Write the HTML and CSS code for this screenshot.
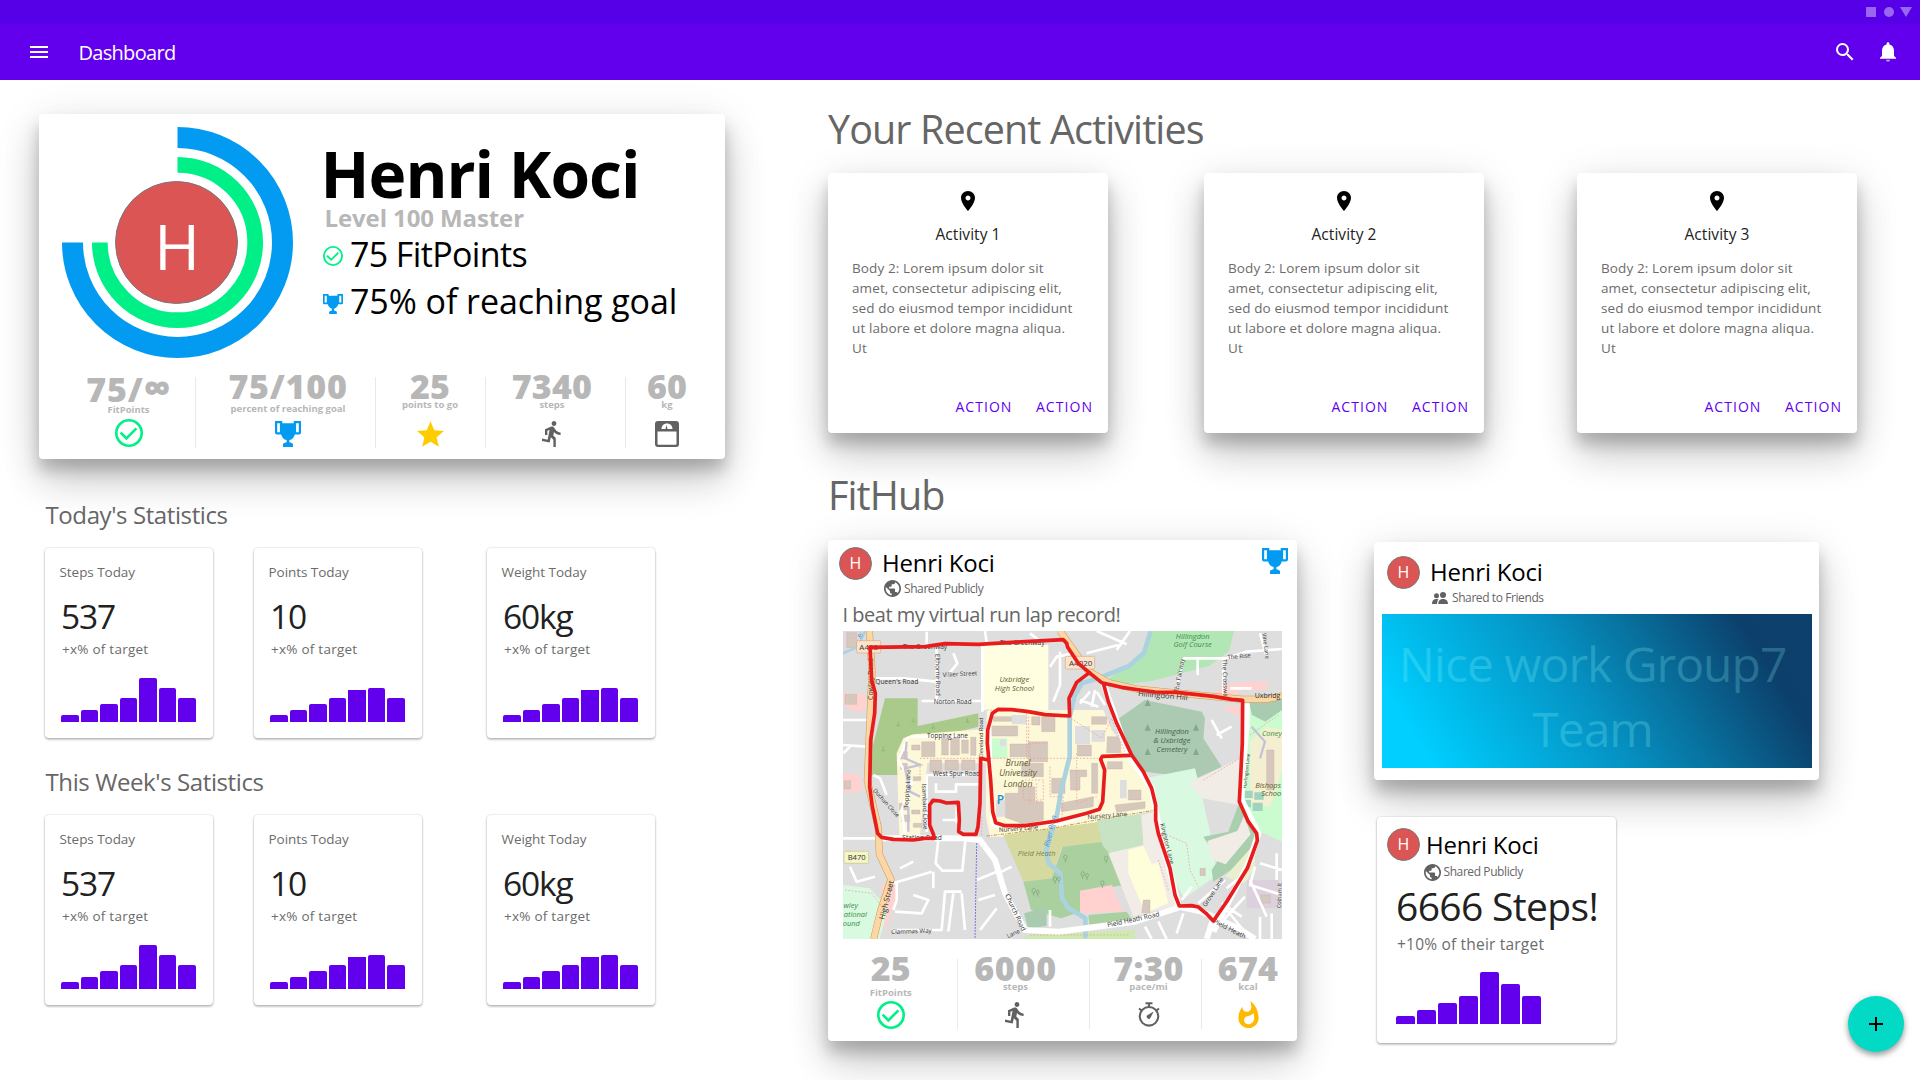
FILE: index.html
```html
<!DOCTYPE html>
<html lang="en">
<head>
<meta charset="utf-8">
<title>Dashboard</title>
<link rel="stylesheet" href="styles.css">
</head>
<body>
<svg class="defs" aria-hidden="true">
  <symbol id="check" viewBox="0 0 28 28"><circle cx="14" cy="14" r="12.7" fill="none" stroke="#00f087" stroke-width="2.6"/><path d="M5.6 13.6l5.8 5.7L21.4 9.4" fill="none" stroke="#00f087" stroke-width="2.6"/></symbol>
  <symbol id="trophy" viewBox="0 0 26 26"><path fill="#039bf2" fill-rule="evenodd" d="M0 0h7.3v2.2h11.4V0H26v11.6c0 1-.8 1.8-1.8 1.8h-4.4c-.7 3-2.6 5-5.4 5.7v2.2c1.500.2 3 .9 3.600 1.800V26H8v-2.900c.6-.9 2.100-1.600 3.600-1.800v-2.200c-2.800-.7-4.700-2.700-5.400-5.700H1.800C.8 13.400 0 12.600 0 11.600zM2.200 2.300v8.900h2.700V2.300zM21.100 2.300v8.900h2.700V2.300z"/></symbol>
  <symbol id="star" viewBox="2 2 20 19"><path fill="#fc0" d="M12 17.270 18.180 21l-1.640-7.030L22 9.240l-7.190-.61L12 2 9.190 8.630 2 9.240l5.460 4.730L5.820 21z"/></symbol>
  <symbol id="run" viewBox="3.500 1.500 17.500 21.500"><path fill="#616161" d="M13.490 5.480c1.100 0 2-.9 2-2s-.9-2-2-2-2 .9-2 2 .9 2 2 2zm-3.600 13.900 1-4.400 2.100 2v6h2v-7.500l-2.100-2 .6-3c1.300 1.500 3.300 2.500 5.500 2.500v-2c-1.900 0-3.500-1-4.300-2.400l-1-1.600c-.4-.6-1-1-1.700-1-.3 0-.5.1-.8.1l-5.200 2.200v4.700h2v-3.400l1.800-.7-1.600 8.100-4.900-1-.4 2 7 1.400z"/></symbol>
  <symbol id="scale" viewBox="0 0 24 26"><path fill="#616161" fill-rule="evenodd" d="M3 0h18a3 3 0 0 1 3 3v20a3 3 0 0 1-3 3H3a3 3 0 0 1-3-3V3a3 3 0 0 1 3-3zM2.500 10.500V23c0 .6.3.8.8.8h17.400c.5 0 .8-.2.800-.8V10.500zM6.500 8h4l1-4 1 4h5c0-3.300-2.400-5.400-5.500-5.400S6.500 4.700 6.500 8z"/></symbol>
  <symbol id="watch" viewBox="0 0 22 25"><g fill="none" stroke="#616161" stroke-width="2.100"><circle cx="11" cy="14.300" r="9.300"/><path d="M7.500 1.200h7M11 1v4M1 6.500l2.600 2M21 6.500l-2.600 2"/></g><path fill="#616161" d="M15.700 9.600 9.700 13a2 2 0 1 0 2.800 2.700z"/></symbol>
  <symbol id="flame" viewBox="4 .6 16 21.400"><path fill="#ffb900" d="M13.500.67s.74 2.650.74 4.800c0 2.060-1.350 3.730-3.410 3.730-2.070 0-3.630-1.670-3.630-3.730l.03-.36C5.210 7.510 4 10.620 4 14c0 4.420 3.580 8 8 8s8-3.580 8-8C20 8.610 17.410 3.800 13.500.67zM11.710 19c-1.780 0-3.220-1.400-3.220-3.140 0-1.620 1.050-2.760 2.810-3.120 1.770-.36 3.600-1.210 4.620-2.580.39 1.290.59 2.650.59 4.040 0 2.650-2.150 4.800-4.800 4.800z"/></symbol>
  <symbol id="globe" viewBox="2 2 20 20"><path fill="#616161" d="M12 2C6.480 2 2 6.480 2 12s4.480 10 10 10 10-4.480 10-10S17.520 2 12 2zm-1 17.930c-3.950-.49-7-3.850-7-7.930 0-.62.08-1.210.21-1.790L9 15v1c0 1.100.9 2 2 2v1.930zm6.900-2.540c-.26-.81-1-1.390-1.900-1.390h-1v-3c0-.55-.45-1-1-1H8v-2h2c.55 0 1-.45 1-1V7h2c1.100 0 2-.9 2-2v-.41c2.930 1.190 5 4.060 5 7.410 0 2.080-.8 3.970-2.100 5.390z"/></symbol>
  <symbol id="people" viewBox="0 0 16 12"><g fill="#616161"><circle cx="11" cy="3" r="3"/><path d="M6.300 12c0-3.600 1.900-5 4.700-5s5 1.400 5 5zM0 12c0-3.500 1.500-4.900 4.300-4.900 1 0 1.600.1 2.200.4C5.500 8.500 5 10 5 12z"/><circle cx="4.500" cy="3.700" r="2.500"/></g></symbol>
  <symbol id="pin" viewBox="0 0 24 24"><path d="M12 2C8.130 2 5 5.130 5 9c0 5.250 7 13 7 13s7-7.750 7-13c0-3.870-3.130-7-7-7zm0 9.500c-1.380 0-2.500-1.120-2.500-2.500s1.120-2.500 2.500-2.500 2.500 1.120 2.500 2.500-1.120 2.500-2.500 2.500z"/></symbol>
</svg>

<header class="header">
  <div class="system">
    <svg width="46" height="10" viewBox="0 0 46 10"><path d="M0 0h10v10H0zM34 0h12l-6 10z"/><circle cx="23" cy="5" r="5"/></svg>
  </div>
  <div class="appbar">
    <svg class="menu" width="18" height="12" viewBox="0 0 18 12"><path d="M0 0h18v2H0zM0 5h18v2H0zM0 10h18v2H0z"/></svg>
    <h1>Dashboard</h1>
    <svg width="24" height="24" viewBox="0 0 24 24"><path d="M15.500 14h-.79l-.28-.27A6.471 6.471 0 0 0 16 9.500 6.500 6.500 0 1 0 9.500 16c1.610 0 3.090-.59 4.230-1.570l.27.28v.79l5 4.990L20.490 19l-4.990-5zm-6 0C7.010 14 5 11.990 5 9.500S7.010 5 9.500 5 14 7.010 14 9.500 11.990 14 9.500 14z"/></svg>
    <svg class="bell" width="24" height="24" viewBox="0 0 24 24"><path d="M12 2.300c-.8 0-1.400.6-1.400 1.400v.7C7.800 5 6 7.400 6 10.500v5.600l-2 1.600v1h16v-1l-2-1.600v-5.600c0-3.100-1.800-5.500-4.600-6.100v-.7c0-.8-.6-1.400-1.400-1.400z"/><path opacity=".6" d="M10 19.700h4a2 2 0 0 1-4 0z"/></svg>
  </div>
</header>

<main class="main">
  <div class="left">
    <section class="card profile">
      <div class="profile-top">
        <svg class="rings" width="232" height="232" viewBox="0 0 232 232">
          <g fill="none"><path d="M115.500 10.500A105 105 0 1 1 10.500 115.500" stroke="#039bf2" stroke-width="21"/><path d="M115.500 37.800A77.700 77.700 0 1 1 37.800 115.500" stroke="#00f087" stroke-width="15.700"/></g>
          <circle cx="114.500" cy="115.500" r="61" fill="#db5555" stroke="#777" stroke-width="1"/>
          <text x="115" y="143" text-anchor="middle">H</text>
        </svg>
        <div class="profile-info">
          <h2>Henri Koci</h2>
          <p class="level">Level 100 Master</p>
          <p class="line"><svg width="20" height="20"><use href="#check"/></svg><span class="fp">75 FitPoints</span></p>
          <p class="line goal"><svg width="20" height="20"><use href="#trophy"/></svg><span>75% of reaching goal</span></p>
        </div>
      </div>
      <div class="metrics metrics-profile">
        <div class="m low"><b class="inf">75/<span>∞</span></b><small>FitPoints</small><svg width="28" height="28"><use href="#check"/></svg></div>
        <div class="m mid"><b class="wide">75/100</b><small>percent of reaching goal</small><svg width="26" height="26"><use href="#trophy"/></svg></div>
        <div class="m"><b>25</b><small>points to go</small><svg width="27" height="26"><use href="#star"/></svg></div>
        <div class="m"><b>7340</b><small>steps</small><svg width="21" height="26"><use href="#run"/></svg></div>
        <div class="m"><b>60</b><small>kg</small><svg width="24" height="26"><use href="#scale"/></svg></div>
      </div>
    </section>

    <h3 class="sub">Today's Statistics</h3>
    <div class="stats">
      <article class="stat"><p class="label">Steps Today</p><p class="value">537</p><p class="delta">+x% of target</p><div class="bars"><i style="height:7px"></i><i style="height:12px"></i><i style="height:18px"></i><i style="height:24px"></i><i style="height:44px"></i><i style="height:34px"></i><i style="height:24px"></i></div></article>
      <article class="stat"><p class="label">Points Today</p><p class="value">10</p><p class="delta">+x% of target</p><div class="bars"><i style="height:7px"></i><i style="height:12px"></i><i style="height:18px"></i><i style="height:24px"></i><i class="cut" style="height:32.500px"></i><i style="height:34px"></i><i style="height:24px"></i></div></article>
      <article class="stat"><p class="label">Weight Today</p><p class="value">60kg</p><p class="delta">+x% of target</p><div class="bars"><i style="height:7px"></i><i style="height:12px"></i><i style="height:18px"></i><i style="height:24px"></i><i class="cut" style="height:32.500px"></i><i style="height:34px"></i><i style="height:24px"></i></div></article>
    </div>
    <h3 class="sub week">This Week's Satistics</h3>
    <div class="stats">
      <article class="stat"><p class="label">Steps Today</p><p class="value">537</p><p class="delta">+x% of target</p><div class="bars"><i style="height:7px"></i><i style="height:12px"></i><i style="height:18px"></i><i style="height:24px"></i><i style="height:44px"></i><i style="height:34px"></i><i style="height:24px"></i></div></article>
      <article class="stat"><p class="label">Points Today</p><p class="value">10</p><p class="delta">+x% of target</p><div class="bars"><i style="height:7px"></i><i style="height:12px"></i><i style="height:18px"></i><i style="height:24px"></i><i class="cut" style="height:32.500px"></i><i style="height:34px"></i><i style="height:24px"></i></div></article>
      <article class="stat"><p class="label">Weight Today</p><p class="value">60kg</p><p class="delta">+x% of target</p><div class="bars"><i style="height:7px"></i><i style="height:12px"></i><i style="height:18px"></i><i style="height:24px"></i><i class="cut" style="height:32.500px"></i><i style="height:34px"></i><i style="height:24px"></i></div></article>
    </div>
  </div>

  <div class="right">
    <h2 class="title">Your Recent Activities</h2>
    <div class="activities">
      <article class="card activity"><svg width="24" height="24"><use href="#pin"/></svg><h4>Activity 1</h4><p>Body 2: Lorem ipsum dolor sit<br>amet, consectetur adipiscing elit,<br>sed do eiusmod tempor incididunt<br>ut labore et dolore magna aliqua.<br>Ut</p><div class="actions"><a>ACTION</a><a>ACTION</a></div></article>
      <article class="card activity"><svg width="24" height="24"><use href="#pin"/></svg><h4>Activity 2</h4><p>Body 2: Lorem ipsum dolor sit<br>amet, consectetur adipiscing elit,<br>sed do eiusmod tempor incididunt<br>ut labore et dolore magna aliqua.<br>Ut</p><div class="actions"><a>ACTION</a><a>ACTION</a></div></article>
      <article class="card activity"><svg width="24" height="24"><use href="#pin"/></svg><h4>Activity 3</h4><p>Body 2: Lorem ipsum dolor sit<br>amet, consectetur adipiscing elit,<br>sed do eiusmod tempor incididunt<br>ut labore et dolore magna aliqua.<br>Ut</p><div class="actions"><a>ACTION</a><a>ACTION</a></div></article>
    </div>
    <h2 class="title hub">FitHub</h2>
    <div class="feed">
      <article class="card post">
        <div class="author">
          <span class="avatar">H</span>
          <div class="who"><h4>Henri Koci</h4><p><svg width="17" height="17"><use href="#globe"/></svg>Shared Publicly</p></div>
          <svg class="award" width="26" height="26"><use href="#trophy"/></svg>
        </div>
        <p class="message">I beat my virtual run lap record!</p>
        <svg class="map" width="439" height="308" viewBox="39 33 1317 924">
          <path fill="#dedede" d="M39 33h1317v924H39z"/>
          <!-- land use -->
          <path fill="#e3d6e3" d="M39 33h60l-25 45-35 20z"/>
          <path fill="#ffd2cf" d="M39 218l68 4v52H68l-29-22zM39 460l50 4 10 40-20 12H39zM155 795l45-10v50l-30 85h-20zM1185 195l65-10h60v25h-70l-30 15h-60zM1185 258h50v35l-50-25z"/>
          <path fill="#a9ca8a" d="M165 235h98v83l182-38v40l-90 22-115 5-32 50v68H123l5-85z"/>
          <path fill="#fffee1" d="M457 75h198v195H457z"/>
          <path fill="#fdf8d8" d="M470 270h350l25 60 60 75 50 60 25 105-170 35-200 45H480l-12-60V430H292l-22 215h-62l-8-245 20-45 30-12 210-15h10z"/>
          <path fill="#b3e6b5" d="M965 33h247l-15 60-60 45-170 45-85 10-55-10 55-40 60-40z"/>
          <path fill="#abcab1" d="M860 300l85-60 170 35 10 20-5 60 55 85-75 35-155-20-55-70z"/>
          <path fill="#d9fae0" d="M945 475l150-30 20 80 25 110 22 130-100 70-30-55-55-150v-90z"/>
          <path fill="#f1ede6" d="M1075 490l155-75v140l-115-20z"/>
          <path fill="#cbfcd0" d="M1240 255l116-20v430l-75-35-55-80 15-150z"/>
          <path fill="#f4efd0" d="M1260 365l50-45 46 10v120l-36 110-60-10z"/>
          <path fill="#a9ccb0" d="M1255 240l101-5v35l-50 35-40-20z"/>
          <path fill="#a9cfaf" d="M1120 650l75-15 30-80 30 40 35 60-50 70-90 60-5-35 20-30z"/>
          <path fill="#f1ede6" d="M1132 663l90-30 20-45 20 55-75 90-42-15z"/>
          <path fill="#eaf0cd" d="M1185 770l90-100v70l-30 50z"/>
          <path fill="#d6d9a0" d="M520 645l290-40 10 65-125 10-30 95-85 10z"/>
          <path fill="#abd0a0" d="M580 785l85-10 33-95 125-15 60 130-130 20v60l-60 20-90-25z"/>
          <path fill="#c7e3c4" d="M800 600l130-17 12 95-105 22-20-25z"/>
          <path fill="#f1ede6" d="M835 700l105-25-5-90 40-10 30 130 35 150-130 35z"/>
          <path fill="#fffedb" d="M895 690l45-13 25 55 20-3 30 120-70 30-50-120z"/>
          <path fill="#abd0a0" d="M775 885l115-10 20 30-130 25z"/>
          <path fill="#ffd2cf" d="M750 812l95-17 35 80-130 5z"/>
          <path fill="#d9fae0" d="M39 795l80 10 55 60-25 92H39z"/>
          <path fill="#cdebb0" d="M600 945l315-15v27H570z"/>
          <path fill="#a9ccb0" d="M582 880l68-18v55l-55 10z"/>
          <path fill="#cbfcd0" d="M482 355h50v60h-50z"/>
          <path fill="#ddd0dd" d="M1250 780h95v85h-95z"/>
          <!-- campus buildings -->
          <path fill="#d6c8bd" stroke="#bfaea3" d="M483 318h80v30h-80zM540 372h60v38h-60zM595 365h58v60h-58zM605 290h25v25h-25zM635 290h40v45h-40zM742 375h42v33h-42zM785 290h45v23h-45zM832 350h40v48h-42zM525 520h40v-20h50v45h25v55l-60 12-55-20zM665 475h40v45h-40zM720 450h50v20h-20v40h-28zM785 430h18v90h-18zM690 550l100-20v30l-95 15zM575 430h65v40h-65zM275 365h40v45h-40zM335 355h20v50h-20zM362 355h26v50h-26zM395 360h20v40h-20zM422 352h16v54h-16zM300 420h35v34h-35zM345 420h40v30h-40zM395 420h40v30h-40zM490 290h60v14h-60zM855 555l90-10v20l-85 12zM832 425h45v22h-45zM210 395h22v22h-22zM245 375h25v15h-25zM212 430h20v18h-20zM250 470h22v12h-22zM208 550h24v20h-24zM215 585h24v20h-24zM245 570h25v12h-25zM250 610h25v12h-25zM1310 390h22v120h-22zM50 38h30v45H50zM45 223h35v30H45zM42 482h20v25H42zM1293 825h28v24h-28zM1110 745h16v22h-16zM940 840h20v38h-25zM895 510h38v30h-38z"/>
          <path fill="#dedede" d="M498 540h28v50h-28zM870 480h20v55h-20zM735 318h45v55h-45zM785 330h40v35h-40zM545 285h45v28h-45zM510 358h18v20h-18z"/>
          <path fill="#9fd3bf" d="M1243 512h25v22h-25zM1273 517h28v22h-28zM1243 540h20v22h-20zM1268 548h30v25h-30z"/>
          <!-- river -->
          <path fill="none" stroke="#aad3df" stroke-width="14" stroke-linejoin="round" d="M962 33l-20 65-45 40-100 40-42 12-22 40-14 60v120l-25 100-14 80-32 100 8 40 35 30 5 75 20 30 50 30v60"/>
          <path fill="none" stroke="#aad3df" stroke-width="8" d="M105 33L85 80l-46 20"/>
          <!-- local roads -->
          <path fill="none" stroke="#fff" stroke-width="8" stroke-linejoin="round" d="M457 70v205M138 175h85l95 10M290 35v40M465 33l5 35M275 243h180M320 80v160M370 100l12 30-32 40M240 350h165M235 350l-30 70 40 70-30 80 10 70M290 465h150M290 465v170M318 490v25h60v-22h70M338 600h50M380 560v50M39 300h80M39 375l70 5M60 380l-20 20M130 465l20 10 20 50M600 40l40 30M770 100l95-25M730 100l-50 10-20 30M690 95v100l-20 50M795 210l-10 50M750 240l55 20M800 215l25 40M750 250l30-35M800 33l90 40M860 90l40-57M1060 115h130l60-20 106-8M1060 115l-20 90M1103 115v50M1180 118v105M1290 40l20 70M1200 205h65M1145 300l30 55M1160 345l45-25M39 655h100M60 740l20 45 55-15M170 795l70-20 65-20M210 745l40-20M325 660l-8 70 20 22h60l10-100M310 755v50M200 790v50l-10 30M250 825l45 15-20 40-80-5M185 930h150l10-115h50M370 820l-15 115M395 820l10 110M440 780l60-25M445 840l50-15M450 930l50-65M505 760l40-20M1085 800l-30 40M1105 850l80-70M1220 780l-30 25M1290 730l66 20M1275 740l-15 55 96 30M1180 900l65-70M1260 780l50 110M1340 700v80M945 920l20 37M985 905l25 52M1060 880l-20 60M1190 870l50 60M1290 890v67M1325 880v77M1175 850l60 40M660 870v50"/>
          <path fill="none" stroke="#c4c4d6" stroke-width="7" d="M230 365l-5 50 45 20-45 10 15 70 30 15M235 560v75M1265 320l40 45-15 50"/>
          <g fill="none" stroke="#fff" stroke-width="18" stroke-linejoin="round">
            <path d="M140 655h260l50 5 45 60 30 100 60 110 100 5 230-30 130-42M1045 860l70 15 110 50 50 32M1150 895l-20 62M1250 250v60l-15 190v40l50 100-25 80-110 215M820 190l75 215 70 100 20 110 60 240"/>
            <path stroke-width="8" d="M480 280l5 330 15 10 200-10 110-40"/>
          </g>
          <!-- main roads -->
          <g fill="none" stroke-linejoin="round">
            <path stroke="#c99a5a" stroke-width="21" d="M118 33l8 120-14 330 33 140 3 80 35 75-30 90-22 89M690 33l25 35 60 85 60 35 90 20 310 30h75l46-10"/>
            <path stroke="#fcd6a4" stroke-width="18" d="M118 33l8 120-14 330 33 140 3 80 35 75-30 90-22 89M690 33l25 35 60 85 60 35 90 20 310 30h75l46-10"/>
          </g>
          <path fill="none" stroke="#f2a0a0" stroke-width="2.500" stroke-dasharray="5 5" d="M470 270h120v145M270 415h540M270 430v50M596 290v80h60M660 440v90h40l-5 70M128 433h70M715 290l100 65 30-60 40 100M740 400v150l60-20M1000 640l70 30 10 80 25 50M1120 480l110-65M985 720l30 90M580 480v60h60v-60zM600 500v60M620 490v60M45 810l80 10 40 50M1260 345l85-60M600 945h300M455 590v60"/>
          <path fill="none" stroke="#c09a50" stroke-width="3" stroke-dasharray="10 4 3 4" d="M470 648l190-22 150-28 160-27"/>
          <path fill="none" stroke="#44e" stroke-width="3" stroke-dasharray="4 5" d="M440 670l-5 287"/>
          <g class="map-shields"><rect x="80" y="62" width="72" height="37" rx="4"/><rect x="706" y="109" width="88" height="38" rx="4"/><rect class="b" x="42" y="694" width="74" height="36" rx="3"/></g>
          <g class="map-text">
            <text x="88" y="90" font-size="24">A408</text><text x="717" y="137" font-size="24">A4020</text><text x="53" y="721" font-size="23">B470</text>
            <text x="218" y="87">The Greenway</text><text x="510" y="74">The Greenway</text>
            <text x="136" y="192">Queen's Road</text><text transform="translate(338 171) rotate(-3)" font-size="18.500">Villier Street</text><text x="311" y="252" font-size="19">Norton Road</text>
            <text transform="translate(316 102) rotate(89)" font-size="19">Elthorne Road</text><text x="291" y="354" font-size="19.500">Topping Lane</text><text x="309" y="469" font-size="19">West Spur Road</text>
            <text transform="translate(459 415) rotate(-90)" font-size="17">Cleveland Road</text><text transform="translate(234 565) rotate(-86)" font-size="18.500">Topping Lane</text><text transform="translate(276 492) rotate(88)" font-size="19">Isambard Close</text>
            <text transform="translate(128 512) rotate(48)" font-size="17">Duchan Close</text><text x="217" y="660">Station Road</text><text transform="translate(184 942) rotate(-2)" font-size="18.500">Clammas Way</text>
            <text transform="translate(163 900) rotate(-76)" font-size="23">High Street</text><text transform="translate(130 240) rotate(-90)" font-size="21">Cowley Road</text>
            <text transform="translate(525 826) rotate(65)">Church Road</text><text transform="translate(833 922) rotate(-12)">Pield Heath Road</text><text transform="translate(1148 908) rotate(27)">Pield Heath</text>
            <text font-size="23" transform="translate(924 228) rotate(5)">Hillingdon Hill</text><text x="1274" y="234" font-size="21">Uxbridg</text>
            <text transform="translate(1045 218) rotate(-80)" font-size="18.500">The Fairway</text><text transform="translate(1193 118) rotate(-5)" font-size="18">The Rise</text><text transform="translate(1177 118) rotate(88)" font-size="19">The Crossway</text>
            <text transform="translate(1297 40) rotate(83)" font-size="17">Vine Lane</text><text transform="translate(1249 505) rotate(-84)" font-size="14">Harlington Lane</text><text transform="translate(990 612) rotate(76)" font-size="19">Kingston Lane</text>
            <text transform="translate(507 636) rotate(-4)" font-size="19">Nursery Lane</text><text transform="translate(773 598) rotate(-5)" font-size="19">Nursery Lane</text><text transform="translate(1127 862) rotate(-57)" font-size="19">Grove Lane</text><text transform="translate(534 955) rotate(-25)" font-size="18">Lane</text>
            <text transform="translate(1353 865) rotate(-88)" font-size="17">Colham R</text>
          </g>
          <g class="map-place">
            <text x="553" y="186">Uxbridge</text><text x="553" y="212">High School</text>
            <g font-size="26"><text x="564" y="437">Brunel</text><text x="564" y="469">University</text><text x="564" y="500">London</text></g>
            <g class="green"><text x="1088" y="56">Hillingdon</text><text x="1088" y="82">Golf Course</text><text x="62" y="864">wley</text><text x="76" y="891">ational</text><text x="64" y="918">ound</text><text x="1326" y="349">Coney</text></g>
            <g class="dark"><text x="1026" y="342">Hillingdon</text><text x="1026" y="369">&amp; Uxbridge</text><text x="1026" y="396">Cemetery</text></g>
            <text x="620" y="707" opacity=".7">Pield Heath</text><text x="1314" y="503">Bishops</text><text x="1324" y="529">Schoo</text>
          </g>
          <g class="map-water"><text transform="translate(656 682) rotate(-76)">River Pinn</text><text transform="translate(92 57) rotate(-55)" font-size="19">Ri</text></g>
          <text class="map-parking" x="500" y="551">P</text>
          <path fill="none" stroke="#8ab06a" stroke-width="2" d="M205 305v12m-6 0h12M250 293v12m-6 0h12M310 312v12m-6 0h12M412 294v12m-6 0h12M160 380v12m-6 0h12"/>
          <path fill="none" stroke="#789f73" stroke-width="2" d="M611 805a5 7 0 1 0 .1 0m0 14v8M623 810a4 6 0 1 0 .1 0m0 12v8M675 770a5 7 0 1 0 .1 0m0 14v8M687 770a4 6 0 1 0 .1 0m0 12v8M758 755a5 7 0 1 0 .1 0m0 14v8M771 760a4 6 0 1 0 .1 0m0 12v8M817 782a5 7 0 1 0 .1 0m0 14v8M828 708a5 7 0 1 0 .1 0m0 14v8M706 705a5 7 0 1 0 .1 0m0 14v8"/>
          <path fill="#83aa88" d="M953 238l9 20h-18zM1098 312l9 20h-18zM953 312l9 20h-18zM953 385l9 20h-18zM1098 385l9 20h-18z"/>
          <!-- route -->
          <g fill="none" stroke="#e81c1c" stroke-width="11" stroke-linejoin="round" stroke-linecap="round">
            <path d="M120 82L285 80 345 71 445 73 545 67 700 59 710 70 713 82 745 130 778 158 815 188 875 202 930 210 975 216 1040 217 1150 229 1205 238 1238 241 1237 370 1228 545 1255 605 1280 640 1282 662 1252 745 1190 845 1150 903 1128 880 1105 861 1085 857 1048 858 1035 825 1020 745 985 640 977 600V555L965 505 940 455 905 405 860 310 835 245 820 190"/>
            <path d="M778 158L740 187 717 235 719 288 645 284 595 275 545 269 505 268 487 280 473 330 472 370 482 480 488 575 497 608 525 617 585 617 680 603 770 580 808 568 818 545 824 450 812 418 817 409 903 406"/>
            <path d="M120 82L125 180 136 220 134 280 122 360 119 500 127 560 143 640 155 652 190 658 250 660 285 655 313 655 311 645 299 615V555L309 541 330 543 350 549 385 547 388 600 386 635 400 643H438L444 620 450 550 452 415 474 420"/>
          </g>
        </svg>
        <div class="metrics metrics-post">
          <div class="m low2"><b>25</b><small>FitPoints</small><svg width="28" height="28"><use href="#check"/></svg></div>
          <div class="m"><b class="wide">6000</b><small>steps</small><svg width="21" height="26"><use href="#run"/></svg></div>
          <div class="m"><b>7:30</b><small>pace/mi</small><svg width="22" height="25"><use href="#watch"/></svg></div>
          <div class="m"><b>674</b><small>kcal</small><svg width="21" height="27"><use href="#flame"/></svg></div>
        </div>
      </article>
      <div class="side">
        <article class="card friends">
          <div class="author">
            <span class="avatar">H</span>
            <div class="who"><h4>Henri Koci</h4><p><svg width="16" height="12"><use href="#people"/></svg>Shared to Friends</p></div>
          </div>
          <div class="banner">Nice work Group7<br>Team</div>
        </article>
        <article class="stat steps">
          <div class="author">
            <span class="avatar">H</span>
            <div class="who"><h4>Henri Koci</h4><p><svg width="17" height="17"><use href="#globe"/></svg>Shared Publicly</p></div>
          </div>
          <p class="total">6666 Steps!</p>
          <p class="target">+10% of their target</p>
          <div class="bars big"><i style="height:8.500px"></i><i style="height:14.500px"></i><i style="height:21.500px"></i><i style="height:28.500px"></i><i style="height:52px"></i><i style="height:40.500px"></i><i style="height:28.500px"></i></div>
        </article>
      </div>
    </div>
  </div>
</main>
<button class="fab" aria-label="Add"><svg width="14" height="14" viewBox="0 0 14 14"><path d="M6 0h2v6h6v2H8v6H6V8H0V6h6z"/></svg></button>
</body>
</html>
```
FILE: styles.css
```css
* { box-sizing: border-box; margin: 0; padding: 0; }
body {
  width: 1920px; height: 1080px; overflow: hidden; background: #fff; color: #000;
  font-family: "Open Sans", "Noto Sans", sans-serif; font-weight: 400;
}
h1, h2, h3, h4 { font-weight: inherit; }
p, h1, h2, h3, h4, b, small { white-space: nowrap; }
svg { display: block; flex: none; }
.defs { width: 0; height: 0; position: absolute; }

.header { position: relative; z-index: 1; color: #fff; fill: #fff; }
.system { height: 24px; background: #5600e8; display: flex; justify-content: flex-end; padding: 7px 8px 0 0; }
.system svg { opacity: .4; }
.appbar { height: 56px; background: #6200ee; display: flex; align-items: center; padding: 0 20px 0 30px; }
.appbar svg { margin-top: -1px; }
.appbar .menu { margin-top: 0; }
.appbar h1 { font-size: 20px; letter-spacing: -.7px; margin: 1px auto 0 30.500px; }
.appbar .bell { margin-left: 19px; }

.main { display: flex; }
.left { width: 828px; padding: 34px 0 0 39px; }
.right { flex: 1; padding-top: 25px; }
.card {
  background: #fff; border-radius: 4px;
  box-shadow: 0 11px 15px rgba(0,0,0,.2), 0 9px 46px rgba(0,0,0,.12), 0 24px 38px rgba(0,0,0,.14);
}

/* profile */
.profile { width: 686px; height: 345px; padding: 12.500px 0 0 22.500px; }
.profile-top { display: flex; height: 232px; }
.rings text { font-size: 62px; fill: #fff; }
.profile-info { padding: 15px 0 0 27px; }
.profile-info h2 { font-size: 64px; line-height: 64px; font-weight: 700; letter-spacing: -.95px; }
.level { font-size: 24px; line-height: 24px; font-weight: 700; letter-spacing: -.1px; color: #b7b7b7; margin: .5px 0 0 4px; }
.line { display: flex; align-items: center; gap: 7px; font-size: 34px; line-height: 34px; letter-spacing: -.07px; margin: 7px 0 0 2.500px; }
.line svg { margin-top: 3px; }
.line .fp { letter-spacing: -.63px; }
.line.goal { margin-top: 13px; }
.goal svg { margin-top: 5px; }

.metrics { display: grid; color: #b7b7b7; font-weight: 700; }
.metrics-profile { grid-template-columns: 133px 180px 110px 140px 83px; height: 71px; margin: 18.500px 0 0 1px; }
.m { display: flex; flex-direction: column; align-items: center; border-right: 1px solid #e9e9e9; padding-bottom: 1px; }
.m:last-child { border-right: 0; }
.m b { font-size: 34px; line-height: 34px; margin-top: -8px; letter-spacing: .2px; }
.m small { font-size: 9.500px; line-height: 10px; margin-top: -3px; }
.m svg { margin-top: auto; }
.m b.wide { letter-spacing: .75px; }
.m b.inf { letter-spacing: .8px; }
.inf span { font-size: 39px; letter-spacing: 0; line-height: 0; }
.low b { margin-top: -5px; }
.low small { margin-top: -1px; }
.mid { padding-left: 6px; }
.mid small { margin-top: 1px; }
.metrics-profile .m:nth-child(4) { padding-right: 6px; }

/* statistics */
.sub { font-size: 24px; line-height: 32px; letter-spacing: -.4px; color: #666; margin: 39.500px 0 17.500px 6.500px; height: 32px; }
.sub.week { margin-top: 27.500px; }
.stats { display: flex; margin-left: 6px; gap: 41px; }
.stats .stat:last-child { margin-left: 24px; }
.stat {
  width: 168px; height: 190px; background: #fff; border-radius: 4px; padding: 13.500px 0 0 16px;
  box-shadow: 0 1px 3px rgba(0,0,0,.2), 0 2px 2px rgba(0,0,0,.12), 0 0 2px rgba(0,0,0,.14);
}
.label { font-size: 13.500px; line-height: 20px; letter-spacing: -.05px; color: #6c6c6c; margin-left: -1.500px; }
.value { font-size: 33.500px; line-height: 40px; letter-spacing: -1.100px; color: #212121; margin-top: 14px; }
.delta { font-size: 13.500px; line-height: 20px; letter-spacing: .25px; color: #6c6c6c; margin: 3px 0 0 1px; }
.bars { display: flex; align-items: flex-end; gap: 2px; width: 135px; height: 44px; margin-top: 19.500px; }
.bars i { flex: 1; background: #6200ee; border-radius: 2px 2px 0 0; }
.bars i.cut { border-radius: 0; }

/* activities */
.title { font-size: 39.500px; line-height: 48px; letter-spacing: -.9px; color: #666; margin: 0 0 20px 0; height: 48px; }
.title.hub { margin: 38px 0 21px; }
.activities { display: flex; gap: 96px; }
.activity:last-child { margin-left: -3px; }
.activity { width: 280px; height: 260px; padding: 16px 15px 0 24px; display: flex; flex-direction: column; }
.activity > svg { margin-left: 104px; }
.activity h4 { font-size: 15.500px; line-height: 24px; color: #222; letter-spacing: .05px; margin: 8.500px 9px 0 0; text-align: center; }
.activity p { font-size: 13.500px; line-height: 20px; letter-spacing: .11px; color: #6c6c6c; margin-top: 12.500px; }
.actions { display: flex; justify-content: flex-end; gap: 23.500px; margin-top: 38.500px; }
.actions a { font-size: 14px; line-height: 20px; letter-spacing: 1.050px; color: #6200ee; }

/* feed */
.feed { display: flex; gap: 77px; align-items: flex-start; }
.author { display: flex; height: 56px; }
.avatar {
  width: 33px; height: 33px; border-radius: 50%; border: 1px solid #777; background: #db5555; color: #fff;
  font-size: 16px; line-height: 31px; text-align: center; flex: none;
}
.who { margin-left: 10px; }
.who h4 { font-size: 24px; line-height: 30px; height: 30px; letter-spacing: -.2px; margin-top: 1px; }
.who p { display: flex; align-items: center; gap: 3px; height: 16px; font-size: 12px; line-height: 16px; letter-spacing: -.41px; color: #666; margin: 2.500px 0 0 2px; }
.post { width: 469px; height: 501px; padding-top: 7px; }
.post .author { padding: 0 16px 0 11px; }
.award { margin: 1px -7px 0 auto; }
.message { font-size: 20px; line-height: 24px; letter-spacing: -.48px; color: #666; margin: -.5px 0 4.500px 14.500px; }
.map { margin-left: 15px; }
.map-shields rect { fill: #fbe3c9; stroke: #c99a6a; stroke-width: 1.500; }
.map-shields .b { fill: #f5f5c5; stroke: #b8b870; }
.map-text { font-size: 20px; fill: #333; }
.map-place { font-size: 22.500px; font-style: italic; fill: #5b5b2c; text-anchor: middle; }
.map-place .green { fill: #3a9147; }
.map-place .dark { fill: #3f6148; }
.map-water { font-size: 22px; font-style: italic; fill: #4c8fc4; }
.map-parking { font-size: 36px; font-weight: 600; fill: #1b8fd8; }
.metrics-post { grid-template-columns: 129.500px 132px 112px 93px; height: 70px; margin-top: 20px; }
.metrics-post .m:nth-child(1) { padding: 0 3px 0 0; }
.metrics-post .m:nth-child(2) { padding-right: 15px; }
.metrics-post .m:nth-child(3) { padding: 0 0 2px 7px; }
.low2 small { margin-top: 3px; }

.side { padding-top: 2px; }
.friends { width: 445px; height: 238px; padding-top: 14px; }
.friends .author { padding-left: 13px; height: 58px; }
.friends .who p { gap: 4px; }
.banner {
  width: 430px; height: 154px; margin-left: 8px; padding: 16.500px 9px 0 0; text-align: center;
  font-size: 48px; line-height: 65px; letter-spacing: -1px; color: rgba(150,255,255,.22);
  background: linear-gradient(58deg, #00cfff 10%, #00c0f0 19%, #0592c3 47%, #08709d 64%, #0c3f6b 86%, #0d406c);
}
.steps { width: 239px; height: 226px; margin: 37px 0 0 3px; padding: 11px 0 0 10px; }
.steps .author { height: 55px; }
.steps .who { margin: 1px 0 0 6px; }
.steps .who p { margin: 4px 0 0 -2.500px; }
.total { font-size: 39px; line-height: 44px; letter-spacing: -.65px; color: #212121; margin: .5px 0 0 9px; }
.target { font-size: 15.500px; line-height: 24px; letter-spacing: .2px; color: #6c6c6c; margin: 4.500px 0 0 10px; }
.bars.big { width: 145px; height: 52px; margin: 16px 0 0 9px; }

.fab {
  position: absolute; left: 1848px; top: 996px; width: 56px; height: 56px; border: 0; border-radius: 50%; background: #03dac5;
  display: flex; align-items: center; justify-content: center;
  box-shadow: 0 3px 5px rgba(0,0,0,.2), 0 1px 10px rgba(0,0,0,.12), 0 4px 6px rgba(0,0,0,.14);
}
```
